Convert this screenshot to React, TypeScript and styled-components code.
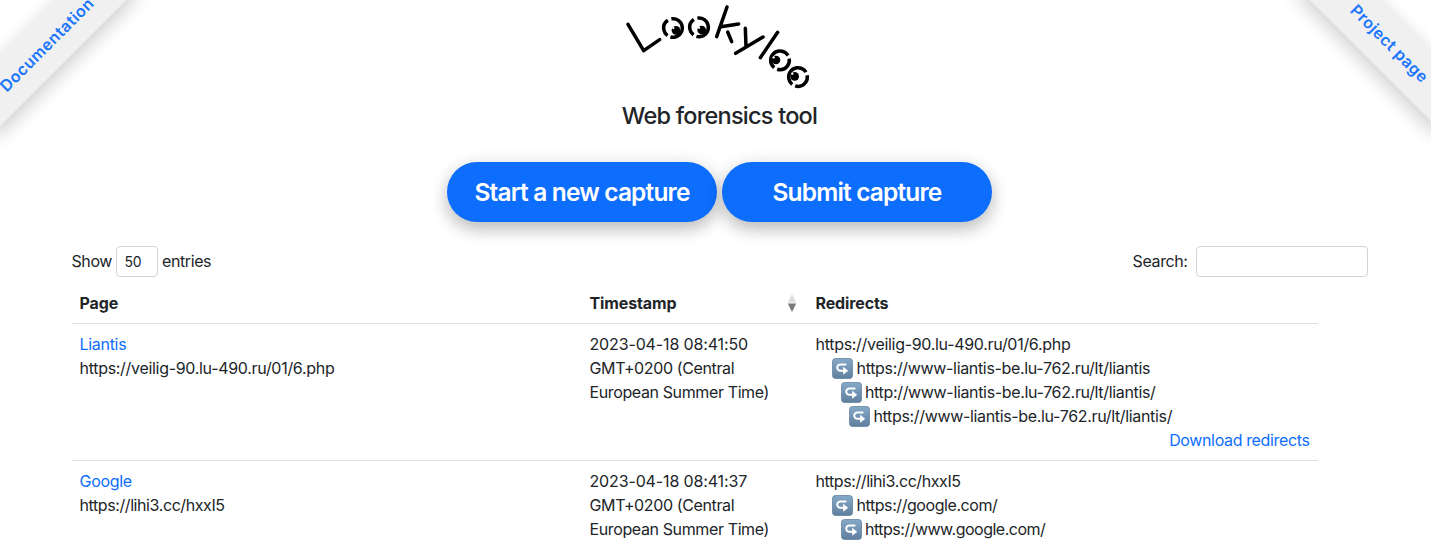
import React from "react";
import styled, { createGlobalStyle } from "styled-components";

const GlobalStyle = createGlobalStyle`
  *, *::before, *::after { box-sizing: border-box; }
  html, body { margin: 0; height: 546px; overflow: hidden; background: #fff; }
  body {
    font-family: Inter, "Liberation Sans", sans-serif;
    font-size: 16px;
    line-height: 24px;
    letter-spacing: -0.3px;
    color: #212529;
  }
`;

const Page = styled.div`
  position: relative;
  width: 1431px;
  height: 546px;
  overflow: hidden;
`;

const Ribbon = styled.a<{ $side: "left" | "right" }>`
  position: absolute;
  top: ${(p) => (p.$side === "left" ? "20px" : "18px")};
  ${(p) => (p.$side === "left" ? "left: -54.5px;" : "right: -57px;")}
  width: 200px;
  height: 50px;
  padding-left: ${(p) => (p.$side === "left" ? "2px" : "3px")};
  line-height: ${(p) => (p.$side === "left" ? "50px" : "49px")};
  text-align: center;
  white-space: nowrap;
  background: #f0f0f0;
  color: #1b76fd;
  font-weight: 600;
  letter-spacing: ${(p) => (p.$side === "left" ? "0.5px" : "0.4px")};
  text-decoration: none;
  box-shadow: 0 5px 20px rgba(0, 0, 0, 0.2);
  transform: rotate(${(p) => (p.$side === "left" ? "-45deg" : "45deg")});
`;

const Content = styled.main`
  width: 1296px;
  margin-left: 71.5px;
`;

const Header = styled.header`
  display: flex;
  flex-direction: column;
  align-items: center;
`;

const Logo = styled.svg`
  display: block;
  width: 210px;
  height: 100px;
`;

const Subtitle = styled.h4`
  margin: 1px 0 32px;
  font-size: 23.5px;
  font-weight: 500;
  line-height: 29px;
  letter-spacing: -0.77px;
`;

const Actions = styled.div`
  display: flex;
  gap: 5px;
`;

const PillButton = styled.button`
  width: 270px;
  height: 60px;
  padding: 0;
  border: 0;
  border-radius: 30px;
  background: #0d6efd;
  color: #fff;
  font: 600 24.5px/60px Inter, "Liberation Sans", sans-serif;
  letter-spacing: -0.84px;
  box-shadow: 0 8px 16px rgba(0, 0, 0, 0.16), 0 4px 20px rgba(0, 0, 0, 0.14);
`;

const Controls = styled.div`
  display: flex;
  justify-content: space-between;
  align-items: center;
  height: 31px;
  margin-top: 24px;
`;

const ControlLabel = styled.label<{ $gap: number }>`
  display: flex;
  align-items: center;
  gap: ${(p) => p.$gap}px;
  letter-spacing: -0.4px;
`;

const ControlText = styled.span`
  padding-bottom: 2px;
`;

const LengthBox = styled.span`
  width: 42px;
  height: 31px;
  padding-left: 7.5px;
  border: 1px solid #ced4da;
  border-radius: 4px;
  font-size: 14px;
  line-height: 30px;
  letter-spacing: -0.2px;
`;

const SearchInput = styled.input`
  width: 172px;
  height: 31px;
  border: 1px solid #ced4da;
  border-radius: 4px;
  background: #fff;
`;

const Table = styled.table`
  width: 1246px;
  margin-top: 6px;
  table-layout: fixed;
  border-collapse: separate;
  border-spacing: 0;
`;

const Th = styled.th<{ $width: number }>`
  width: ${(p) => p.$width}px;
  padding: 8px;
  border-bottom: 1px solid #dee2e6;
  text-align: left;
  font-weight: 700;
  letter-spacing: -0.12px;
`;

const SortHeading = styled.div`
  display: flex;
  justify-content: space-between;
  align-items: center;
`;

const SortIcon = styled.svg`
  display: block;
  width: 10px;
  height: 18px;
  margin-right: 2.5px;
`;

const Td = styled.td`
  padding: 8px;
  border-bottom: 1px solid #dee2e6;
  vertical-align: top;
  white-space: nowrap;
`;

const Link = styled.a`
  color: #0d6efd;
  text-decoration: none;
`;

const Line = styled.div<{ $track?: number }>`
  height: 24px;
  letter-spacing: ${(p) => p.$track ?? -0.3}px;
`;

const Redirect = styled.div<{ $depth: number; $track: number }>`
  display: flex;
  align-items: center;
  gap: 3.5px;
  height: 24px;
  padding-left: ${(p) => 8 + p.$depth * 8.5}px;
  letter-spacing: ${(p) => p.$track}px;
`;

const DownloadRow = styled.div`
  text-align: right;
  letter-spacing: -0.36px;
`;

const HookIcon = () => (
  <svg width="21" height="21" viewBox="0 0 21 21">
    <defs>
      <linearGradient id="tile" x1="0" y1="0" x2="0" y2="1">
        <stop offset="0" stopColor="#86a9c8" />
        <stop offset="1" stopColor="#607f9f" />
      </linearGradient>
    </defs>
    <rect x="0.5" y="0.5" width="20" height="20" rx="3" fill="url(#tile)" stroke="#6483a0" strokeWidth="0.8" />
    <path d="M13.6 6.4H8.4a3.2 3.2 0 0 0 0 6.4h3.6" fill="none" stroke="#fff" strokeWidth="2" strokeLinecap="round" />
    <path d="M11.2 8.8l5 4-5 4z" fill="#fff" />
  </svg>
);

type Capture = {
  title: string;
  url: string;
  urlTrack: number;
  time: string;
  redirects: { url: string; track: number }[];
};

const captures: Capture[] = [
  {
    title: "Liantis",
    url: "https://veilig-90.lu-490.ru/01/6.php",
    urlTrack: -0.3,
    time: "2023-04-18 08:41:50",
    redirects: [
      { url: "https://www-liantis-be.lu-762.ru/lt/liantis", track: -0.33 },
      { url: "http://www-liantis-be.lu-762.ru/lt/liantis/", track: -0.34 },
      { url: "https://www-liantis-be.lu-762.ru/lt/liantis/", track: -0.34 },
    ],
  },
  {
    title: "Google",
    url: "https://lihi3.cc/hxxI5",
    urlTrack: -0.41,
    time: "2023-04-18 08:41:37",
    redirects: [
      { url: "https://google.com/", track: -0.43 },
      { url: "https://www.google.com/", track: -0.5 },
    ],
  },
];

const LookylooLogo = () => (
  <Logo viewBox="0 0 630 300" fill="none" stroke="#000" strokeWidth="10.5" strokeLinecap="round" strokeLinejoin="round">
    <path d="M39 73 86 152 134 119" />
    <path d="M336 21 305 110M318 80 371 72M338 96 350 125" />
    <path d="M391 85 393 139M444 111 362 160" />
    <path d="M488 97 436 173" />
    <g strokeLinecap="butt">
      <circle cx="174" cy="84" r="28" pathLength="360" strokeDasharray="205 20 110 25" transform="rotate(-100 174 84)" />
      <circle cx="252" cy="82" r="28" pathLength="360" strokeDasharray="205 20 110 25" transform="rotate(-100 252 82)" />
      <circle cx="495" cy="181" r="28" pathLength="360" strokeDasharray="200 20 118 22" transform="rotate(128 495 181)" />
      <circle cx="549" cy="231" r="28" pathLength="360" strokeDasharray="200 20 118 22" transform="rotate(128 549 231)" />
    </g>
    <g fill="#000" stroke="none">
      <circle cx="183" cy="91" r="13" />
      <circle cx="260" cy="90" r="13" />
      <circle cx="483" cy="180" r="13" />
      <circle cx="539" cy="229" r="13" />
    </g>
    <g fill="#fff" stroke="none">
      <circle cx="175" cy="84" r="3.5" />
      <circle cx="252" cy="83" r="3.5" />
      <circle cx="476" cy="172" r="3.5" />
      <circle cx="532" cy="221" r="3.5" />
    </g>
  </Logo>
);

export default function App() {
  return (
    <Page>
      <GlobalStyle />
      <Content>
        <Header>
          <LookylooLogo />
          <Subtitle>Web forensics tool</Subtitle>
          <Actions>
            <PillButton>Start a new capture</PillButton>
            <PillButton>Submit capture</PillButton>
          </Actions>
        </Header>
        <Controls>
          <ControlLabel $gap={4}>
            <ControlText>Show</ControlText>
            <LengthBox>50</LengthBox>
            <ControlText>entries</ControlText>
          </ControlLabel>
          <ControlLabel $gap={8}>
            <ControlText>Search:</ControlText>
            <SearchInput />
          </ControlLabel>
        </Controls>
        <Table>
          <thead>
            <tr>
              <Th $width={510}>Page</Th>
              <Th $width={226}>
                <SortHeading>
                  Timestamp
                  <SortIcon viewBox="0 0 10 18">
                    <path d="M5 0 9.2 8.5H0.8z" fill="#dedede" />
                    <path d="M5 18 9.2 9.5H0.8z" fill="#77797b" />
                  </SortIcon>
                </SortHeading>
              </Th>
              <Th $width={510}>Redirects</Th>
            </tr>
          </thead>
          <tbody>
            {captures.map((capture) => (
              <tr key={capture.title}>
                <Td>
                  <Line>
                    <Link>{capture.title}</Link>
                  </Line>
                  <Line $track={capture.urlTrack}>{capture.url}</Line>
                </Td>
                <Td>
                  <Line $track={-0.14}>{capture.time}</Line>
                  <Line $track={-0.38}>GMT+0200 (Central</Line>
                  <Line $track={-0.38}>European Summer Time)</Line>
                </Td>
                <Td>
                  <Line $track={capture.urlTrack}>{capture.url}</Line>
                  {capture.redirects.map((redirect, i) => (
                    <Redirect key={redirect.url} $depth={i + 1} $track={redirect.track}>
                      <HookIcon />
                      {redirect.url}
                    </Redirect>
                  ))}
                  {capture.title === "Liantis" && (
                    <DownloadRow>
                      <Link>Download redirects</Link>
                    </DownloadRow>
                  )}
                </Td>
              </tr>
            ))}
          </tbody>
        </Table>
      </Content>
      <Ribbon $side="left">Documentation</Ribbon>
      <Ribbon $side="right">Project page</Ribbon>
    </Page>
  );
}
